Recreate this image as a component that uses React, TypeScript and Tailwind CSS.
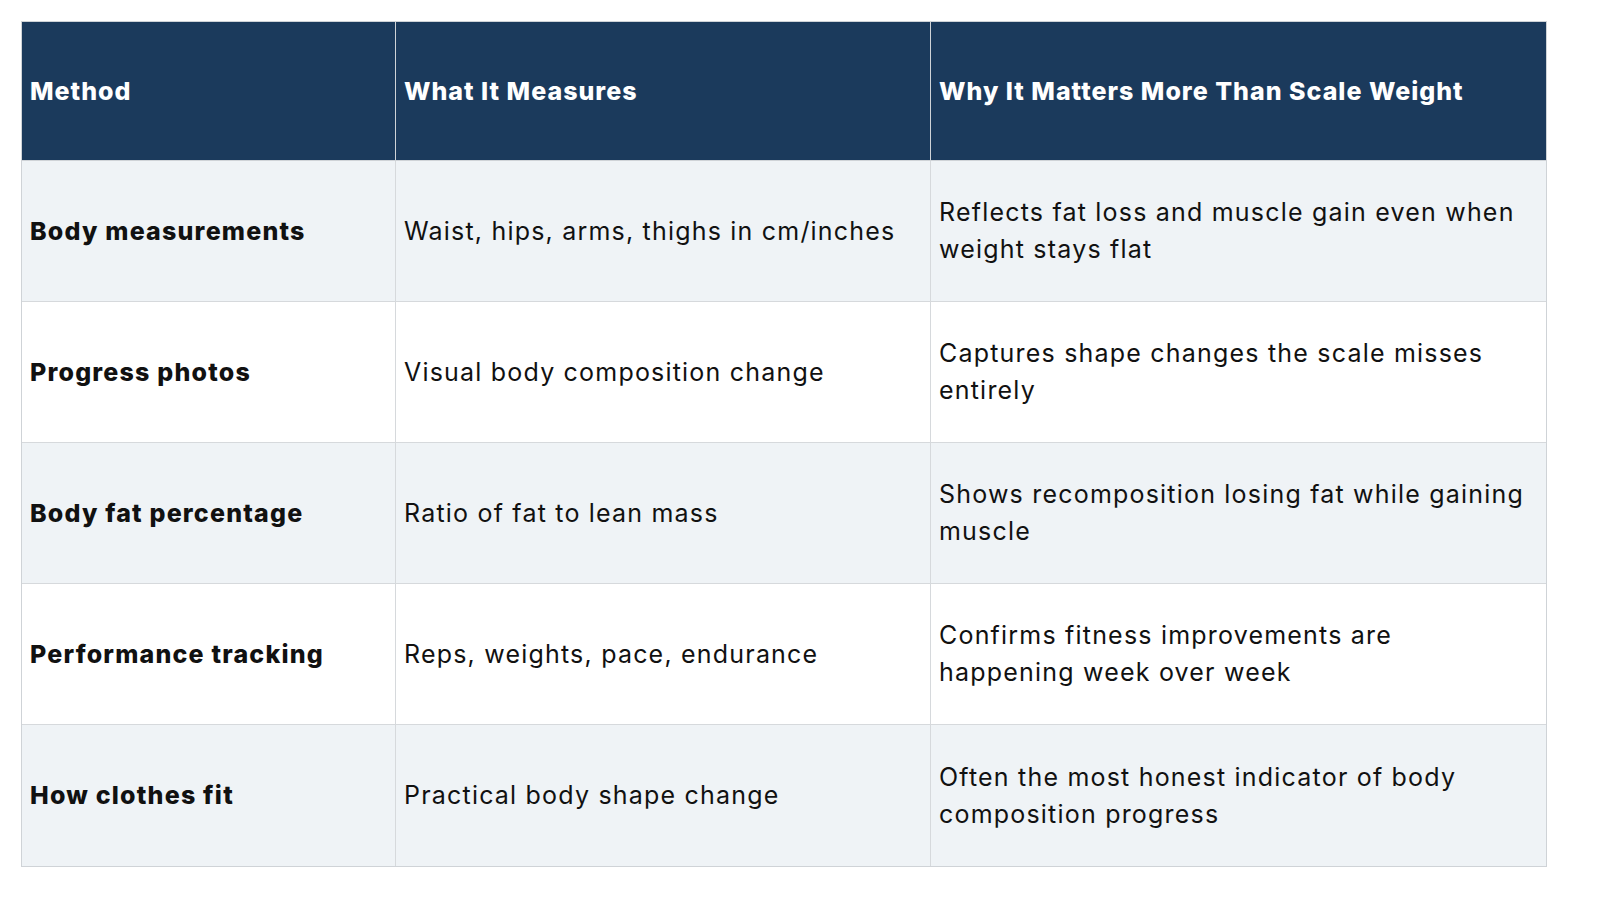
import React from "react";

const rows: [string, string, string[]][] = [
  ["Body measurements", "Waist, hips, arms, thighs in cm/inches", ["Reflects fat loss and muscle gain even when", "weight stays flat"]],
  ["Progress photos", "Visual body composition change", ["Captures shape changes the scale misses", "entirely"]],
  ["Body fat percentage", "Ratio of fat to lean mass", ["Shows recomposition losing fat while gaining", "muscle"]],
  ["Performance tracking", "Reps, weights, pace, endurance", ["Confirms fitness improvements are", "happening week over week"]],
  ["How clothes fit", "Practical body shape change", ["Often the most honest indicator of body", "composition progress"]],
];

export default function App() {
  return (
    <div className="w-[1600px] h-[900px] bg-white pt-[21px] pl-[21px]" style={{ fontFamily: "Inter, 'Noto Sans', sans-serif" }}>
      <div className="w-[1526px] border border-[#cfd3d7] text-[25px] leading-[37px]">
        <div className="grid grid-cols-[374px_535px_1fr] h-[139px] bg-[#1b3a5c] border-b border-[#cfd3d7]">
          <div className="flex items-center px-[8px] border-r border-[#cfd3d7] text-white font-extrabold tracking-[1px]">Method</div>
          <div className="flex items-center px-[8px] border-r border-[#cfd3d7] text-white font-extrabold tracking-[1px]">What It Measures</div>
          <div className="flex items-center px-[8px] text-white font-extrabold tracking-[1px]">Why It Matters More Than Scale Weight</div>
        </div>
        {rows.map((r, i) => (
          <div
            key={i}
            className={
              (i % 2 === 0 ? "bg-[#eff3f6]" : "bg-white") +
              " grid grid-cols-[374px_535px_1fr] h-[141px] " +
              (i < rows.length - 1 ? "border-b border-[#d6d9dc]" : "")
            }
          >
            <div className="flex items-center px-[8px] border-r border-[#d6d9dc] text-[#111111] font-extrabold tracking-[1.2px]">{r[0]}</div>
            <div className="flex items-center px-[8px] border-r border-[#d6d9dc] text-[#111111] tracking-[1.2px]">{r[1]}</div>
            <div className="flex flex-col justify-center px-[8px] text-[#111111] tracking-[1.2px] whitespace-nowrap">
              {r[2].map((line, j) => (
                <span key={j} className="block">{line}</span>
              ))}
            </div>
          </div>
        ))}
      </div>
    </div>
  );
}
